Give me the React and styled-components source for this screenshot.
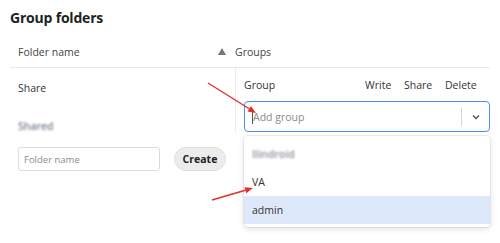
import React from "react";
import styled, { createGlobalStyle } from "styled-components";

const GlobalStyle = createGlobalStyle`
  html, body {
    margin: 0;
    background: #fff;
  }
  body {
    font-family: "Open Sans", "Noto Sans", sans-serif;
    color: #333;
    width: 500px;
    height: 243px;
    overflow: hidden;
  }
`;

const Page = styled.div`
  position: relative;
  padding: 8px 10px 0 10px;
`;

const Title = styled.h2`
  margin: 0;
  font-size: 14px;
  font-weight: 700;
  color: #222;
  line-height: 20px;
  letter-spacing: -0.2px;
`;

const Table = styled.div`
  margin-top: 8px;
  display: grid;
  grid-template-columns: 225px 1fr;
`;

const HeadCell = styled.div`
  height: 31px;
  display: flex;
  align-items: center;
  justify-content: space-between;
  padding-left: ${(p) => p.$pad ?? 8}px;
  padding-right: 8px;
  font-size: 10.5px;
  color: #444;
  border-bottom: 1px solid #e8e8e8;
`;

const SortArrow = styled.span`
  width: 0;
  height: 0;
  border-left: 4px solid transparent;
  border-right: 4px solid transparent;
  border-bottom: 7px solid #777;
  margin-right: 1px;
`;

const LeftCell = styled.div`
  display: flex;
  flex-direction: column;
  padding-left: 8px;
  font-size: 10.5px;
`;

const FolderName = styled.div`
  height: 40px;
  display: flex;
  align-items: center;
  color: #333;
`;

const Blurred = styled.span`
  filter: blur(1.2px);
  color: ${(p) => p.$color || "#7a8296"};
  font-size: 10.5px;
  font-weight: 600;
`;

const BlurRow = styled.div`
  height: 36px;
  display: flex;
  align-items: center;
`;

const CreateForm = styled.div`
  display: flex;
  align-items: center;
  gap: 14px;
  margin-top: 3px;
`;

const TextInput = styled.div`
  box-sizing: border-box;
  width: 142px;
  height: 24px;
  border: 1px solid #dcdcdc;
  border-radius: 3px;
  display: flex;
  align-items: center;
  padding-left: 5px;
  font-size: 9.5px;
  color: #8a8a8a;
`;

const Button = styled.div`
  box-sizing: border-box;
  width: 52px;
  height: 24px;
  border-radius: 12px;
  background: #ececec;
  border: 1px solid #e0e0e0;
  display: flex;
  align-items: center;
  justify-content: center;
  font-size: 10.5px;
  font-weight: 700;
  color: #222;
`;

const RightCell = styled.div`
  border-left: 1px solid #ececec;
  height: 64px;
  padding: 0 0 0 8px;
  position: relative;
`;

const GroupHead = styled.div`
  display: grid;
  grid-template-columns: 1fr 39px 41px 45px;
  height: 33px;
  align-items: center;
  font-size: 10.5px;
  color: #333;
`;

const Select = styled.div`
  box-sizing: border-box;
  height: 31px;
  border: 1.5px solid #4d8ff0;
  border-radius: 4px;
  display: flex;
  align-items: center;
  font-size: 10.5px;
`;

const Placeholder = styled.div`
  flex: 1;
  color: #8a8a8a;
  border-left: 1px solid #555;
  margin-left: 7px;
  line-height: 14px;
`;

const Sep = styled.div`
  width: 1px;
  height: 18px;
  background: #d6d6d6;
`;

const Chevron = styled.div`
  width: 27px;
  display: flex;
  justify-content: center;
  color: #555;
`;

const Menu = styled.div`
  position: absolute;
  left: 8px;
  right: 0;
  top: 68px;
  background: #fff;
  border-radius: 4px;
  box-shadow: 0 0 0 1px rgba(0, 0, 0, 0.06), 0 2px 6px rgba(0, 0, 0, 0.12);
  padding: 4px 0 3px;
  font-size: 10.5px;
  z-index: 2;
`;

const Option = styled.div`
  height: 28px;
  display: flex;
  align-items: center;
  padding-left: 8px;
  color: #333;
  background: ${(p) => (p.$active ? "#dde9fa" : "transparent")};
`;

const Arrows = styled.svg`
  position: absolute;
  left: 0;
  top: 0;
  pointer-events: none;
  z-index: 5;
`;

function Arrow({ x1, y1, x2, y2 }) {
  const a = Math.atan2(y2 - y1, x2 - x1);
  const len = 8;
  const w = 3.2;
  const bx = x2 - len * Math.cos(a);
  const by = y2 - len * Math.sin(a);
  const px = -Math.sin(a) * w;
  const py = Math.cos(a) * w;
  return (
    <g>
      <line x1={x1} y1={y1} x2={bx} y2={by} stroke="#e0302a" strokeWidth="1.4" />
      <polygon
        points={`${x2},${y2} ${bx + px},${by + py} ${bx - px},${by - py}`}
        fill="#e0302a"
      />
    </g>
  );
}

export default function App() {
  return (
    <>
      <GlobalStyle />
      <Page>
        <Title>Group folders</Title>
        <Table>
          <HeadCell>
            Folder name
            <SortArrow />
          </HeadCell>
          <HeadCell $pad={0}>Groups</HeadCell>

          <LeftCell>
            <FolderName>Share</FolderName>
            <BlurRow>
              <Blurred>Shared</Blurred>
            </BlurRow>
            <CreateForm>
              <TextInput>Folder name</TextInput>
              <Button>Create</Button>
            </CreateForm>
          </LeftCell>

          <RightCell>
            <GroupHead>
              <span>Group</span>
              <span>Write</span>
              <span>Share</span>
              <span>Delete</span>
            </GroupHead>
            <Select>
              <Placeholder>Add group</Placeholder>
              <Sep />
              <Chevron>
                <svg width="10" height="10" viewBox="0 0 10 10">
                  <path d="M2 3.5 L5 6.5 L8 3.5" fill="none" stroke="#555" strokeWidth="1.5" />
                </svg>
              </Chevron>
            </Select>
            <Menu>
              <Option>
                <Blurred $color="#8a8d96">Ilindroid</Blurred>
              </Option>
              <Option>VA</Option>
              <Option $active>admin</Option>
            </Menu>
          </RightCell>
        </Table>
        <Arrows width="500" height="243">
          <Arrow x1={208} y1={83} x2={256} y2={113} />
          <Arrow x1={212} y1={200} x2={253} y2={188} />
        </Arrows>
      </Page>
    </>
  );
}
